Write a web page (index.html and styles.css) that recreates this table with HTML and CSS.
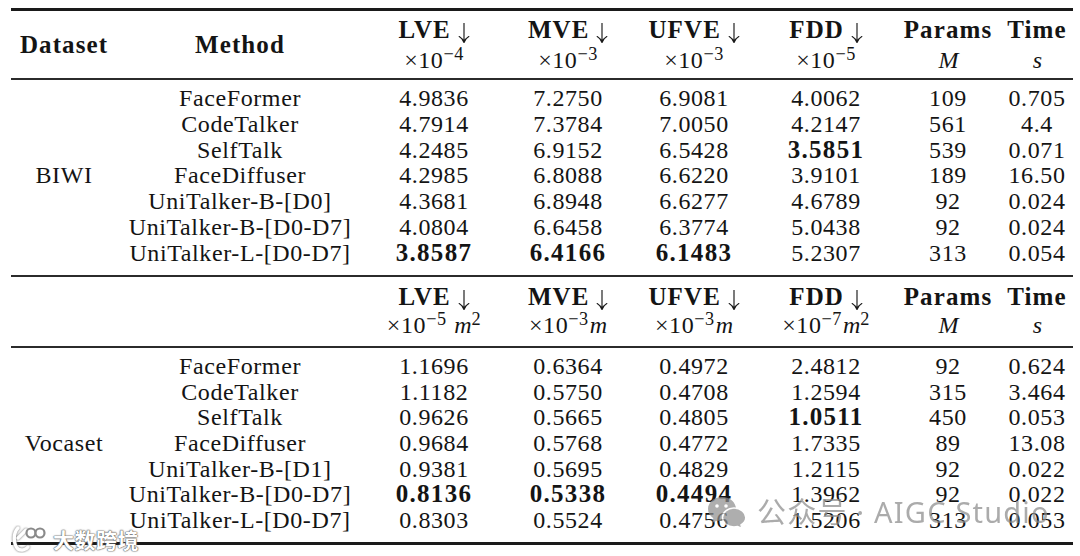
FILE: index.html
```html
<!DOCTYPE html>
<html lang="en">
<head>
<meta charset="utf-8">
<title>UniTalker results</title>
<link rel="stylesheet" href="styles.css">
</head>
<body>
<div class="page">
  <table class="results">
    <colgroup>
      <col class="c-ds"><col class="c-me"><col class="c-lve"><col class="c-mve">
      <col class="c-ufve"><col class="c-fdd"><col class="c-par"><col class="c-time">
    </colgroup>
    <thead>
      <tr class="head">
        <th><b>Dataset</b></th>
        <th><b>Method</b></th>
        <th><div class="hl"><b>LVE</b> <svg class="arr" viewBox="0 0 12 20"><path d="M6 0V19.3M1.2 13.6Q4.8 15.6 6 19.6Q7.2 15.6 10.8 13.6"/></svg></div><div class="hl">×10<sup>−4</sup></div></th>
        <th><div class="hl"><b>MVE</b> <svg class="arr" viewBox="0 0 12 20"><path d="M6 0V19.3M1.2 13.6Q4.8 15.6 6 19.6Q7.2 15.6 10.8 13.6"/></svg></div><div class="hl">×10<sup>−3</sup></div></th>
        <th><div class="hl"><b>UFVE</b> <svg class="arr" viewBox="0 0 12 20"><path d="M6 0V19.3M1.2 13.6Q4.8 15.6 6 19.6Q7.2 15.6 10.8 13.6"/></svg></div><div class="hl">×10<sup>−3</sup></div></th>
        <th><div class="hl"><b>FDD</b> <svg class="arr" viewBox="0 0 12 20"><path d="M6 0V19.3M1.2 13.6Q4.8 15.6 6 19.6Q7.2 15.6 10.8 13.6"/></svg></div><div class="hl">×10<sup>−5</sup></div></th>
        <th><div class="hl"><b>Params</b></div><div class="hl"><i>M</i></div></th>
        <th><div class="hl"><b>Time</b></div><div class="hl"><i>s</i></div></th>
      </tr>
    </thead>
    <tbody class="group">
      <tr class="first">
        <td class="ds" rowspan="7">BIWI</td>
        <td>FaceFormer</td><td>4.9836</td><td>7.2750</td><td>6.9081</td><td>4.0062</td><td>109</td><td>0.705</td>
      </tr>
      <tr><td>CodeTalker</td><td>4.7914</td><td>7.3784</td><td>7.0050</td><td>4.2147</td><td>561</td><td>4.4</td></tr>
      <tr><td>SelfTalk</td><td>4.2485</td><td>6.9152</td><td>6.5428</td><td><b>3.5851</b></td><td>539</td><td>0.071</td></tr>
      <tr><td>FaceDiffuser</td><td>4.2985</td><td>6.8088</td><td>6.6220</td><td>3.9101</td><td>189</td><td>16.50</td></tr>
      <tr><td>UniTalker-B-[D0]</td><td>4.3681</td><td>6.8948</td><td>6.6277</td><td>4.6789</td><td>92</td><td>0.024</td></tr>
      <tr><td>UniTalker-B-[D0-D7]</td><td>4.0804</td><td>6.6458</td><td>6.3774</td><td>5.0438</td><td>92</td><td>0.024</td></tr>
      <tr class="last"><td>UniTalker-L-[D0-D7]</td><td><b>3.8587</b></td><td><b>6.4166</b></td><td><b>6.1483</b></td><td>5.2307</td><td>313</td><td>0.054</td></tr>
    </tbody>
    <tbody class="sub">
      <tr>
        <th></th>
        <th></th>
        <th><div class="hl"><b>LVE</b> <svg class="arr" viewBox="0 0 12 20"><path d="M6 0V19.3M1.2 13.6Q4.8 15.6 6 19.6Q7.2 15.6 10.8 13.6"/></svg></div><div class="hl">×10<sup>−5</sup> <i>m</i><sup>2</sup></div></th>
        <th><div class="hl"><b>MVE</b> <svg class="arr" viewBox="0 0 12 20"><path d="M6 0V19.3M1.2 13.6Q4.8 15.6 6 19.6Q7.2 15.6 10.8 13.6"/></svg></div><div class="hl">×10<sup>−3</sup><i>m</i></div></th>
        <th><div class="hl"><b>UFVE</b> <svg class="arr" viewBox="0 0 12 20"><path d="M6 0V19.3M1.2 13.6Q4.8 15.6 6 19.6Q7.2 15.6 10.8 13.6"/></svg></div><div class="hl">×10<sup>−3</sup><i>m</i></div></th>
        <th><div class="hl"><b>FDD</b> <svg class="arr" viewBox="0 0 12 20"><path d="M6 0V19.3M1.2 13.6Q4.8 15.6 6 19.6Q7.2 15.6 10.8 13.6"/></svg></div><div class="hl">×10<sup>−7</sup><i>m</i><sup>2</sup></div></th>
        <th><div class="hl"><b>Params</b></div><div class="hl"><i>M</i></div></th>
        <th><div class="hl"><b>Time</b></div><div class="hl"><i>s</i></div></th>
      </tr>
    </tbody>
    <tbody class="group voca">
      <tr class="first">
        <td class="ds" rowspan="7">Vocaset</td>
        <td>FaceFormer</td><td>1.1696</td><td>0.6364</td><td>0.4972</td><td>2.4812</td><td>92</td><td>0.624</td>
      </tr>
      <tr><td>CodeTalker</td><td>1.1182</td><td>0.5750</td><td>0.4708</td><td>1.2594</td><td>315</td><td>3.464</td></tr>
      <tr><td>SelfTalk</td><td>0.9626</td><td>0.5665</td><td>0.4805</td><td><b>1.0511</b></td><td>450</td><td>0.053</td></tr>
      <tr><td>FaceDiffuser</td><td>0.9684</td><td>0.5768</td><td>0.4772</td><td>1.7335</td><td>89</td><td>13.08</td></tr>
      <tr><td>UniTalker-B-[D1]</td><td>0.9381</td><td>0.5695</td><td>0.4829</td><td>1.2115</td><td>92</td><td>0.022</td></tr>
      <tr><td>UniTalker-B-[D0-D7]</td><td><b>0.8136</b></td><td><b>0.5338</b></td><td><b>0.4494</b></td><td>1.3962</td><td>92</td><td>0.022</td></tr>
      <tr class="last"><td>UniTalker-L-[D0-D7]</td><td>0.8303</td><td>0.5524</td><td>0.4756</td><td>1.5206</td><td>313</td><td>0.053</td></tr>
    </tbody>
  </table>

  <div class="wm-left">
    <svg class="wm-logo" viewBox="0 0 40 28">
      <path d="M9 3C4 8 4 19 9 24C12 26 17 25 19 22M9 13L17 5" />
      <circle cx="22" cy="8" r="4.5"/>
      <circle cx="31" cy="8" r="4.5"/>
    </svg>
    <span class="wm-left-text">大数跨境</span>
  </div>

  <div class="wm-right">
    <svg class="wm-wechat" viewBox="0 0 40 34">
      <path class="bub1" d="M15 2C7 2 1 7.5 1 14C1 17.8 3 21 6.3 23.2L5 28L10.3 25.4C11.8 25.8 13.4 26 15 26C23 26 29 20.5 29 14C29 7.5 23 2 15 2Z"/>
      <path class="bub2" d="M27 13C20.5 13 15.5 17.3 15.5 22.5C15.5 27.7 20.5 32 27 32C28.3 32 29.5 31.8 30.6 31.5L35 33.5L34 29.8C37 28 38.8 25.4 38.8 22.5C38.8 17.3 33.5 13 27 13Z"/>
      <circle class="eye" cx="10" cy="11" r="1.8"/>
      <circle class="eye" cx="19" cy="11" r="1.8"/>
    </svg>
    <span class="wm-right-text">公众号 · AIGC Studio</span>
  </div>
</div>
</body>
</html>
```
FILE: styles.css
```css
html, body {
  margin: 0;
  padding: 0;
  background: #ffffff;
}

.page {
  position: relative;
  width: 1080px;
  height: 556px;
  box-sizing: border-box;
  padding: 8px 0 0 11px;
  overflow: hidden;
  font-family: "Liberation Serif", serif;
  color: #141414;
}

.results {
  border-collapse: separate;
  border-spacing: 0;
  table-layout: fixed;
  width: 1062px;
  font-size: 24px;
}

.c-ds { width: 106px; }
.c-me { width: 246px; }
.c-lve { width: 142px; }
.c-mve { width: 126px; }
.c-ufve { width: 126px; }
.c-fdd { width: 138px; }
.c-par { width: 106px; }
.c-time { width: 72px; }

.results th,
.results td {
  padding: 0;
  text-align: center;
  white-space: nowrap;
  font-weight: normal;
  letter-spacing: 0.6px;
}

.results td b {
  font-weight: bold;
  font-size: 25px;
  line-height: 0;
  letter-spacing: 1.3px;
}

.results th b {
  font-weight: bold;
  font-size: 25px;
  line-height: 0;
  letter-spacing: 1.1px;
}

.results i {
  font-style: italic;
  letter-spacing: 0;
  padding-left: 1px;
}

.results sup {
  font-size: 0.76em;
  line-height: 0;
  vertical-align: 8px;
  letter-spacing: 0.5px;
}

.arr {
  width: 12px;
  height: 20px;
  vertical-align: -5px;
  fill: none;
  stroke: #1a1a1a;
  stroke-width: 1.15;
  stroke-linecap: round;
}

/* header 1 */
.head th {
  border-top: 3px solid #1a1a1a;
  border-bottom: 2px solid #2b2b2b;
  padding: 4px 0 3px;
  line-height: 30px;
  vertical-align: middle;
}

.hl {
  line-height: 30px;
}

/* header 2 */
.sub th {
  border-top: 2px solid #2b2b2b;
  border-bottom: 2px solid #2b2b2b;
  padding: 5.5px 0 7px;
  vertical-align: middle;
}

.sub .hl {
  line-height: 28px;
}

/* body groups */
.group td {
  line-height: 25.75px;
}

.voca td {
  line-height: 25.6px;
}

.group .first td {
  padding-top: 6px;
}

.group .last td {
  padding-bottom: 9px;
}

.voca .first td {
  padding-top: 6.5px;
}

.voca .last td {
  padding-bottom: 8.5px;
  border-bottom: 3px solid #1a1a1a;
}

.group td.ds {
  padding: 6px 0 9px;
  vertical-align: middle;
}

.voca td.ds {
  padding: 6.5px 0 8.5px;
  border-bottom: 3px solid #1a1a1a;
}

/* watermarks */
.wm-left {
  position: absolute;
  left: 9px;
  top: 525px;
  display: flex;
  align-items: center;
  gap: 4px;
}

.wm-logo {
  width: 40px;
  height: 28px;
  fill: #ffffff;
  stroke: #8a8a8a;
  stroke-width: 2.2;
  stroke-linecap: round;
}

.wm-logo path {
  fill: none;
  stroke: #ffffff;
  stroke-width: 3.4;
  filter: drop-shadow(0 0 1px #666);
}

.wm-left-text {
  font-family: "Noto Sans CJK SC", sans-serif;
  font-weight: bold;
  font-size: 21px;
  line-height: 28px;
  color: #ffffff;
  letter-spacing: 0.5px;
  text-shadow: 0 0 1px #555, 0 0 1px #555, 0 0 2px #777;
}

.wm-right {
  position: absolute;
  left: 707px;
  top: 494px;
  display: flex;
  align-items: center;
  gap: 10px;
  opacity: 0.72;
}

.wm-wechat {
  width: 40px;
  height: 34px;
}

.wm-wechat .bub1 {
  fill: #8f8f8f;
}

.wm-wechat .bub2 {
  fill: #8f8f8f;
  stroke: #ffffff;
  stroke-width: 1.5;
}

.wm-wechat .eye {
  fill: #ffffff;
}

.wm-right-text {
  font-family: "Noto Sans", "Noto Sans CJK SC", sans-serif;
  font-size: 29px;
  line-height: 36px;
  letter-spacing: 1.2px;
  color: #8c8c8c;
}
```
